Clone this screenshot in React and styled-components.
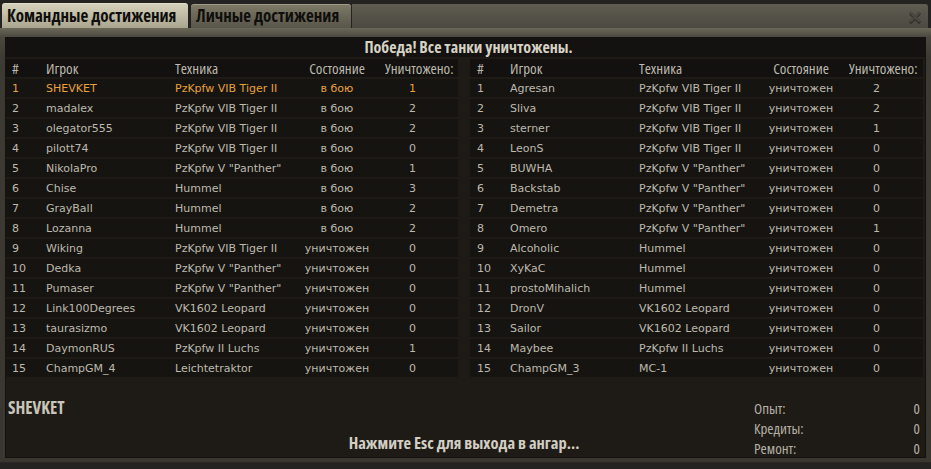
import React from 'react';
import styled, { createGlobalStyle } from 'styled-components';

const HEAD = `"Open Sans", "Noto Sans", sans-serif`;
const BODY = `Tahoma, "DejaVu Sans", "Liberation Sans", sans-serif`;

const Global = createGlobalStyle`
  html, body { margin: 0; padding: 0; background: #1a1917; }
  body { width: 931px; height: 469px; overflow: hidden; }
  * { box-sizing: border-box; }
`;

const Window = styled.div`
  width: 931px;
  height: 469px;
  padding-top: 3px;
  display: flex;
  flex-direction: column;
  background: #242321;
`;

const TabBar = styled.div`
  height: 25px;
  display: flex;
  align-items: stretch;
  padding: 0 3px 0 2px;
  gap: 3px;
`;

const Tab = styled.div`
  display: flex;
  align-items: center;
  padding: 0 5px;
  border-radius: 3px 3px 0 0;
  font-family: ${HEAD};
  font-stretch: 75%;
  font-weight: bold;
  font-size: 17px;
  line-height: 20px;
  color: #0f0e0c;
  white-space: nowrap;
  background: ${p => p.$active
    ? 'linear-gradient(#d6d2bc, #aaa58f)'
    : 'linear-gradient(#7e7a66, #58554a)'};
  box-shadow: inset 0 1px 0 rgba(255,255,255,0.25);
  margin-top: ${p => p.$active ? '0' : '1px'};
  width: ${p => p.$w}px;
`;

const Strip = styled.div`
  flex: 1;
  margin-top: 1px;
  margin-left: -2px;
  border-radius: 0 3px 0 0;
  background: linear-gradient(#5f5c51, #4b4941);
  display: flex;
  justify-content: flex-end;
  align-items: center;
  padding-right: 7px;
`;

const Close = styled.svg`
  width: 12px;
  height: 12px;
  margin-top: 2px;
  filter: drop-shadow(0 1px 0 rgba(0,0,0,0.6));
`;

const Frame = styled.div`
  height: 435px;
  padding: 9px 5px 5px 5px;
  background: linear-gradient(#6b6859 0px, #4b4840 9px, #3d3a34 30px, #3a3731 100%);
  border-bottom: 1px solid #2a2825;
`;

const Panel = styled.div`
  height: 421px;
  background: #1e1b17;
  box-shadow: inset 0 0 0 1px #141210;
  display: flex;
  flex-direction: column;
`;

const Title = styled.div`
  height: 20px;
  flex: none;
  background: #131210;
  font-family: ${HEAD};
  font-stretch: 75%;
  font-weight: bold;
  font-size: 16px;
  color: #d6d2c4;
  display: flex;
  align-items: center;
  justify-content: center;
  padding-left: 6px;
`;

const Tables = styled.div`
  display: grid;
  grid-template-columns: 452px 453px;
  column-gap: 12px;
  padding: 2px 0 0 1px;
`;

const Table = styled.div`
  display: flex;
  flex-direction: column;
  gap: 2px;
`;

const Row = styled.div`
  display: grid;
  grid-template-columns: 40px 129px 126px 72px 1fr;
  height: 18px;
  line-height: ${p => p.$head ? '18px' : '19px'};
  align-items: start;
  background: ${p => p.$head ? '#121110' : '#161411'};
  color: ${p => p.$me ? '#e8a13c' : '#bdb9ad'};
  font-family: ${p => p.$head ? HEAD : BODY};
  font-stretch: ${p => p.$head ? '75%' : 'normal'};
  font-size: ${p => p.$head ? '15px' : '11px'};
  white-space: nowrap;
`;

const Cell = styled.div`
  padding-left: ${p => p.$pl ?? 0}px;
  text-align: ${p => p.$center ? 'center' : 'left'};
`;

const Footer = styled.div`
  flex: 1;
  display: grid;
  grid-template-columns: 1fr auto 1fr;
  padding: 21px 6px 0 3px;
`;

const Name = styled.div`
  font-family: ${HEAD};
  font-stretch: 75%;
  font-weight: bold;
  font-size: 17px;
  color: #c9c5b9;
  line-height: 20px;
`;

const Hint = styled.div`
  align-self: end;
  margin-bottom: 5px;
  font-family: ${HEAD};
  font-stretch: 75%;
  font-weight: bold;
  font-size: 16.5px;
  line-height: 20px;
  color: #d2cec2;
`;

const Stats = styled.div`
  justify-self: end;
  align-self: start;
  width: 166px;
  display: flex;
  flex-direction: column;
`;

const Stat = styled.div`
  display: flex;
  justify-content: space-between;
  height: 20px;
  line-height: 20px;
  font-family: ${HEAD};
  font-stretch: 75%;
  font-size: 15px;
  color: #b4b0a4;
`;

const left = [
  ['SHEVKET', 'PzKpfw VIB Tiger II', 'в бою', 1],
  ['madalex', 'PzKpfw VIB Tiger II', 'в бою', 2],
  ['olegator555', 'PzKpfw VIB Tiger II', 'в бою', 2],
  ['pilott74', 'PzKpfw VIB Tiger II', 'в бою', 0],
  ['NikolaPro', 'PzKpfw V "Panther"', 'в бою', 1],
  ['Chise', 'Hummel', 'в бою', 3],
  ['GrayBall', 'Hummel', 'в бою', 2],
  ['Lozanna', 'Hummel', 'в бою', 2],
  ['Wiking', 'PzKpfw VIB Tiger II', 'уничтожен', 0],
  ['Dedka', 'PzKpfw V "Panther"', 'уничтожен', 0],
  ['Pumaser', 'PzKpfw V "Panther"', 'уничтожен', 0],
  ['Link100Degrees', 'VK1602 Leopard', 'уничтожен', 0],
  ['taurasizmo', 'VK1602 Leopard', 'уничтожен', 0],
  ['DaymonRUS', 'PzKpfw II Luchs', 'уничтожен', 1],
  ['ChampGM_4', 'Leichtetraktor', 'уничтожен', 0],
];

const right = [
  ['Agresan', 'PzKpfw VIB Tiger II', 'уничтожен', 2],
  ['Sliva', 'PzKpfw VIB Tiger II', 'уничтожен', 2],
  ['sterner', 'PzKpfw VIB Tiger II', 'уничтожен', 1],
  ['LeonS', 'PzKpfw VIB Tiger II', 'уничтожен', 0],
  ['BUWHA', 'PzKpfw V "Panther"', 'уничтожен', 0],
  ['Backstab', 'PzKpfw V "Panther"', 'уничтожен', 0],
  ['Demetra', 'PzKpfw V "Panther"', 'уничтожен', 0],
  ['Omero', 'PzKpfw V "Panther"', 'уничтожен', 1],
  ['Alcoholic', 'Hummel', 'уничтожен', 0],
  ['XyKaC', 'Hummel', 'уничтожен', 0],
  ['prostoMihalich', 'Hummel', 'уничтожен', 0],
  ['DronV', 'VK1602 Leopard', 'уничтожен', 0],
  ['Sailor', 'VK1602 Leopard', 'уничтожен', 0],
  ['Maybee', 'PzKpfw II Luchs', 'уничтожен', 0],
  ['ChampGM_3', 'MC-1', 'уничтожен', 0],
];

function Team({ rows, idxPad, killHeadPad, me }) {
  return (
    <Table>
      <Row $head>
        <Cell $pl={idxPad}>#</Cell>
        <Cell>Игрок</Cell>
        <Cell>Техника</Cell>
        <Cell $center>Состояние</Cell>
        <Cell $pl={killHeadPad}>Уничтожено:</Cell>
      </Row>
      {rows.map((r, i) => (
        <Row key={i} $me={me && r[0] === me}>
          <Cell $pl={idxPad}>{i + 1}</Cell>
          <Cell>{r[0]}</Cell>
          <Cell>{r[1]}</Cell>
          <Cell $center>{r[2]}</Cell>
          <Cell $pl={36}>{r[3]}</Cell>
        </Row>
      ))}
    </Table>
  );
}

export default function App() {
  return (
    <>
      <Global />
      <Window>
        <TabBar>
          <Tab $active $w={186}>Командные достижения</Tab>
          <Tab $w={160}>Личные достижения</Tab>
          <Strip>
            <Close viewBox="0 0 12 12">
              <path d="M2 2 L10 10 M10 2 L2 10" stroke="#4a473f" strokeWidth="3" strokeLinecap="round" />
            </Close>
          </Strip>
        </TabBar>
        <Frame>
          <Panel>
            <Title>Победа! Все танки уничтожены.</Title>
            <Tables>
              <Team rows={left} idxPad={6} killHeadPad={12} me="SHEVKET" />
              <Team rows={right} idxPad={7} killHeadPad={12} />
            </Tables>
            <Footer>
              <Name>SHEVKET</Name>
              <Hint>Нажмите Esc для выхода в ангар...</Hint>
              <Stats>
                <Stat><span>Опыт:</span><span>0</span></Stat>
                <Stat><span>Кредиты:</span><span>0</span></Stat>
                <Stat><span>Ремонт:</span><span>0</span></Stat>
              </Stats>
            </Footer>
          </Panel>
        </Frame>
      </Window>
    </>
  );
}
